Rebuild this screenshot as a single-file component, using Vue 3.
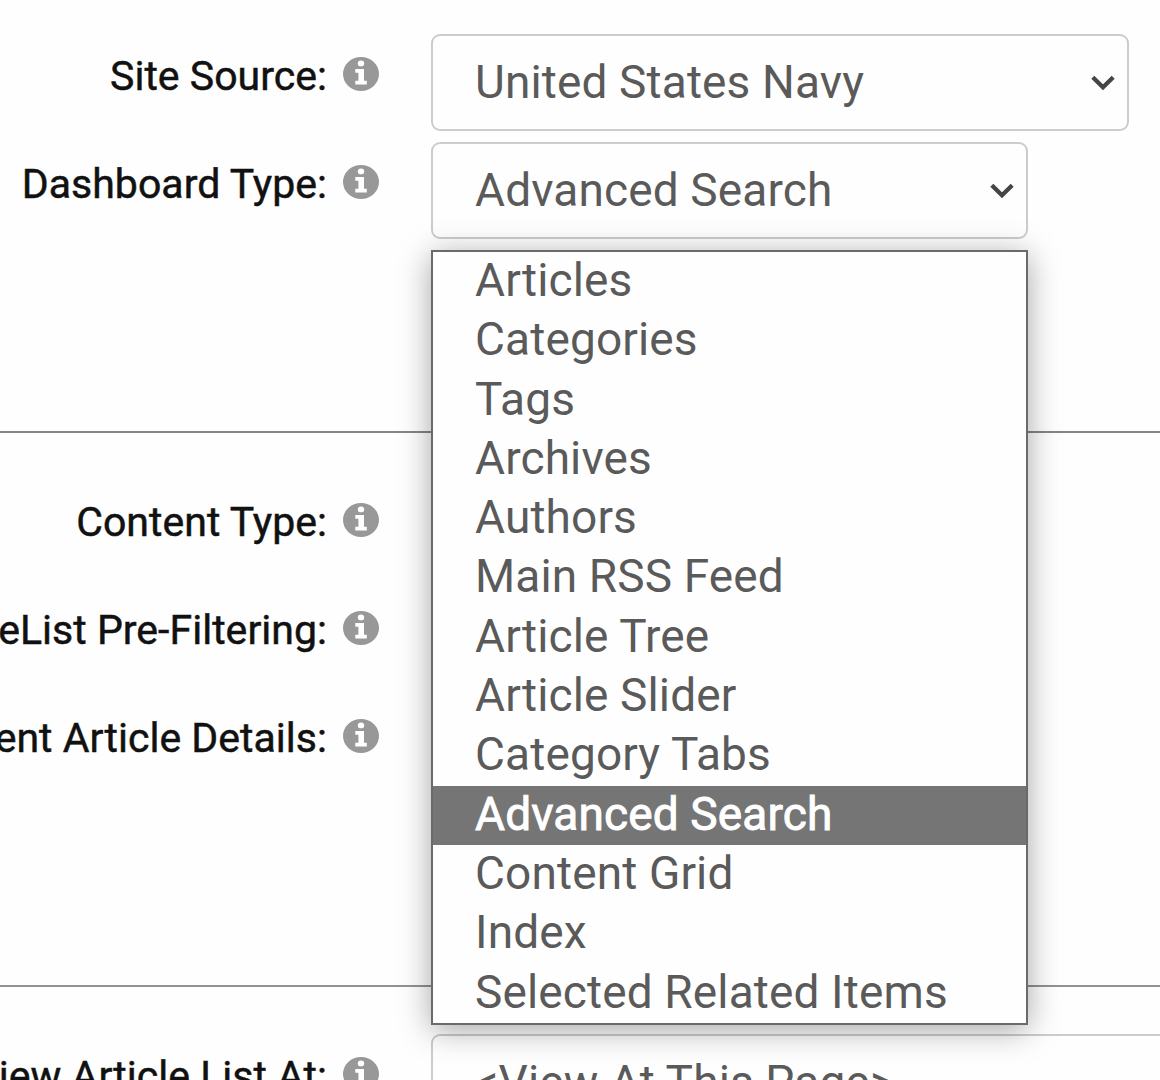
<script setup>
import { h } from 'vue'

const options = [
  'Articles',
  'Categories',
  'Tags',
  'Archives',
  'Authors',
  'Main RSS Feed',
  'Article Tree',
  'Article Slider',
  'Category Tabs',
  'Advanced Search',
  'Content Grid',
  'Index',
  'Selected Related Items',
]
const selected = 'Advanced Search'

const InfoIcon = () =>
  h('svg', { width: 36, height: 34, viewBox: '0 0 36 34' }, [
    h('ellipse', { cx: 18, cy: 17, rx: 18, ry: 17, fill: '#989898' }),
    h('ellipse', { cx: 18, cy: 6.4, rx: 3.2, ry: 2.9, fill: '#fff' }),
    h('path', {
      d: 'M12.3 12H21v11.8h2.8v3.7H12.3v-3.7H15.4v-8h-3.1z',
      fill: '#fff',
    }),
  ])

const Chevron = () =>
  h('svg', { width: 24, height: 16, viewBox: '0 0 24 16' }, [
    h('path', {
      d: 'M1.8 2.3L12 12.2L22.2 2.3',
      fill: 'none',
      stroke: '#454545',
      'stroke-width': 4.3,
    }),
  ])
</script>

<template>
  <main class="settings">
    <section class="group source">
      <div class="row">
        <label class="label"><span>Site Source:</span><InfoIcon /></label>
        <div class="select wide"><span>United States Navy</span><Chevron /></div>
      </div>
      <div class="row">
        <label class="label"><span>Dashboard Type:</span><InfoIcon /></label>
        <div class="select type">
          <span>{{ selected }}</span><Chevron />
          <ul class="menu">
            <li v-for="option in options" :key="option" :class="{ active: option === selected }">
              <span>{{ option }}</span>
            </li>
          </ul>
        </div>
      </div>
    </section>
    <section class="group content">
      <div class="row">
        <label class="label"><span>Content Type:</span><InfoIcon /></label>
      </div>
      <div class="row">
        <label class="label"><span>ArticleList Pre-Filtering:</span><InfoIcon /></label>
      </div>
      <div class="row">
        <label class="label"><span>Content Article Details:</span><InfoIcon /></label>
      </div>
    </section>
    <section class="group view">
      <div class="row">
        <label class="label"><span>View Article List At:</span><InfoIcon /></label>
        <div class="select page"><span>&lt;View At This Page&gt;</span></div>
      </div>
    </section>
  </main>
</template>

<style>
body {
  margin: 0;
  background: #fefefe;
}
</style>

<style scoped>
.settings {
  width: 1160px;
  height: 1080px;
  overflow: hidden;
  display: flex;
  flex-direction: column;
  font-family: Roboto, sans-serif;
  background: #fefefe;
}
.group {
  box-sizing: border-box;
  flex: none;
  display: flex;
  flex-direction: column;
  gap: 11px;
}
.source {
  height: 433px;
  padding-top: 34px;
  border-bottom: 2px solid #858585;
}
.content {
  height: 554px;
  padding-top: 47px;
  border-bottom: 2px solid #929292;
}
.view {
  padding-top: 47px;
}
.row {
  height: 97px;
  flex: none;
  display: flex;
  gap: 52px;
}
.label {
  width: 379px;
  flex: none;
  display: flex;
  justify-content: flex-end;
  align-items: flex-start;
  gap: 16px;
  color: #111;
  font-size: 41px;
  line-height: 48px;
  letter-spacing: 0.03px;
  white-space: nowrap;
  -webkit-text-stroke: 0.5px #111;
}
.label span {
  margin-top: 18px;
}
.label svg {
  flex: none;
  margin-top: 23px;
}
.select {
  position: relative;
  box-sizing: border-box;
  height: 97px;
  flex: none;
  display: flex;
  justify-content: space-between;
  align-items: center;
  padding: 0 12px 0 42px;
  border: 2px solid #ccc;
  border-radius: 9px;
  background: #fefefe;
  color: #5a5a5a;
  font-size: 46px;
  line-height: 54px;
  letter-spacing: 0.13px;
  white-space: nowrap;
}
.select > span {
  margin-top: -1px;
}
.select > svg {
  margin-top: 1px;
}
.wide {
  width: 698px;
}
.type {
  width: 597px;
}
.page {
  width: 800px;
}
.menu {
  position: absolute;
  z-index: 2;
  left: -2px;
  top: 106px;
  box-sizing: border-box;
  width: 597px;
  height: 775px;
  margin: 0;
  padding: 0;
  list-style: none;
  border: 2px solid #6a6a6a;
  background: #fefefe;
  box-shadow: 0 5px 30px rgba(0, 0, 0, 0.35);
}
.menu li {
  height: 59.3px;
  padding-left: 42px;
  line-height: 57px;
}
.menu li.active {
  background: #757575;
  color: #fff;
  -webkit-text-stroke: 0.9px #fff;
}
</style>
